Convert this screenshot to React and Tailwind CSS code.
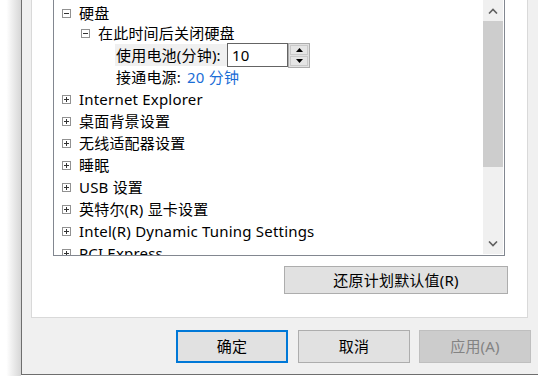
import React from "react";

function ExpandBox({ open }) {
  return (
    <svg width="9" height="9" viewBox="0 0 9 9" className="shrink-0">
      <rect x="0.5" y="0.5" width="8" height="8" fill="#fff" stroke="#919191" />
      <path d="M2 4.5h5" stroke="#333" />
      {!open && <path d="M4.5 2v5" stroke="#333" />}
    </svg>
  );
}

function Node({ level = 0, open, children, h = "h-[22px]" }) {
  const pad = level === 0 ? "pl-[8px]" : "pl-[27px]";
  return (
    <div className={`flex items-center ${h} ${pad}`}>
      <ExpandBox open={open} />
      <span className="ml-[8px] whitespace-nowrap">{children}</span>
    </div>
  );
}

function Scrollbar() {
  return (
    <div className="w-[20px] mr-px mb-px bg-[#f0f0f0] flex flex-col">
      <div className="h-[21px] flex items-center justify-center">
        <svg width="10" height="6" viewBox="0 0 10 6">
          <path d="M1 5.5L5 1.5L9 5.5" fill="none" stroke="#606060" strokeWidth="1.6" />
        </svg>
      </div>
      <div className="h-[146px] bg-[#cdcdcd]" />
      <div className="flex-1" />
      <div className="h-[21px] flex items-center justify-center">
        <svg width="10" height="6" viewBox="0 0 10 6">
          <path d="M1 0.5L5 4.5L9 0.5" fill="none" stroke="#606060" strokeWidth="1.6" />
        </svg>
      </div>
    </div>
  );
}

function Spinner() {
  return (
    <div className="w-[22px] h-[25px] border border-[#acacac] bg-[#e1e1e1] flex flex-col p-px gap-px">
      <div className="flex-1 bg-[#e5e5e5] border border-[#c9c9c9] flex items-center justify-center">
        <svg width="7" height="4" viewBox="0 0 7 4">
          <path d="M0 4L3.5 0L7 4Z" fill="#000" />
        </svg>
      </div>
      <div className="flex-1 bg-[#e5e5e5] border border-[#c9c9c9] flex items-center justify-center">
        <svg width="7" height="4" viewBox="0 0 7 4">
          <path d="M0 0L3.5 4L7 0Z" fill="#000" />
        </svg>
      </div>
    </div>
  );
}

export default function App() {
  return (
    <div className="w-[538px] h-[376px] overflow-hidden flex bg-white text-black text-[15px] tracking-[0.2px] font-['Noto_Sans','Noto_Sans_CJK_SC',sans-serif]">
      <div className="w-[21px] h-full bg-[linear-gradient(to_right,#ffffff_30%,#d6d6d6)]" />
      <div className="w-[517px] h-[375px] border-l border-b border-[#6e6e6e] bg-[#f0f0f0] flex flex-col shrink-0">
        <div className="pl-[9px]">
          <div className="w-[497px] h-[318px] bg-white border-l border-r border-b border-[#d9d9d9] pl-[21px] flex flex-col">
            <div className="w-[452px] h-[256px] border-l border-r border-b border-[#828790] flex">
              <div className="flex-1 overflow-hidden pt-[3px] leading-none">
                <Node open h="h-[20px]">硬盘</Node>
                <Node level={1} open h="h-[21px]">在此时间后关闭硬盘</Node>
                <div className="h-[22px] flex items-center pl-[61px]">
                  <div className="h-[22px] w-[112px] bg-[#f0f0f0] flex items-center pl-[1px] whitespace-nowrap">
                    使用电池(分钟):
                  </div>
                  <div className="w-[61px] h-[24px] border border-[#646464] flex items-center pl-[4px]">10</div>
                  <Spinner />
                </div>
                <div className="h-[22px] flex items-center pl-[62px] whitespace-nowrap">
                  接通电源:<span className="ml-[6px] text-[#1a6dd6]">20 分钟</span>
                </div>
                <Node>Internet Explorer</Node>
                <Node>桌面背景设置</Node>
                <Node>无线适配器设置</Node>
                <Node>睡眠</Node>
                <Node>USB 设置</Node>
                <Node>英特尔(R) 显卡设置</Node>
                <Node>Intel(R) Dynamic Tuning Settings</Node>
                <Node>PCI Express</Node>
              </div>
              <Scrollbar />
            </div>
            <div className="flex justify-end pr-[19px] mt-[10px]">
              <button className="w-[224px] h-[28px] bg-[#e1e1e1] border border-[#adadad] flex items-center justify-center">
                还原计划默认值(R)
              </button>
            </div>
          </div>
        </div>
        <div className="flex pl-[154px] mt-[12px]">
          <button className="w-[112px] h-[33px] bg-[#e1e1e1] border-2 border-[#0078d7] flex items-center justify-center">
            确定
          </button>
          <button className="ml-[10px] w-[112px] h-[33px] bg-[#e1e1e1] border border-[#adadad] flex items-center justify-center">
            取消
          </button>
          <button className="ml-[9px] w-[112px] h-[33px] bg-[#cccccc] border border-[#bfbfbf] text-[#838383] flex items-center justify-center">
            应用(A)
          </button>
        </div>
      </div>
    </div>
  );
}
